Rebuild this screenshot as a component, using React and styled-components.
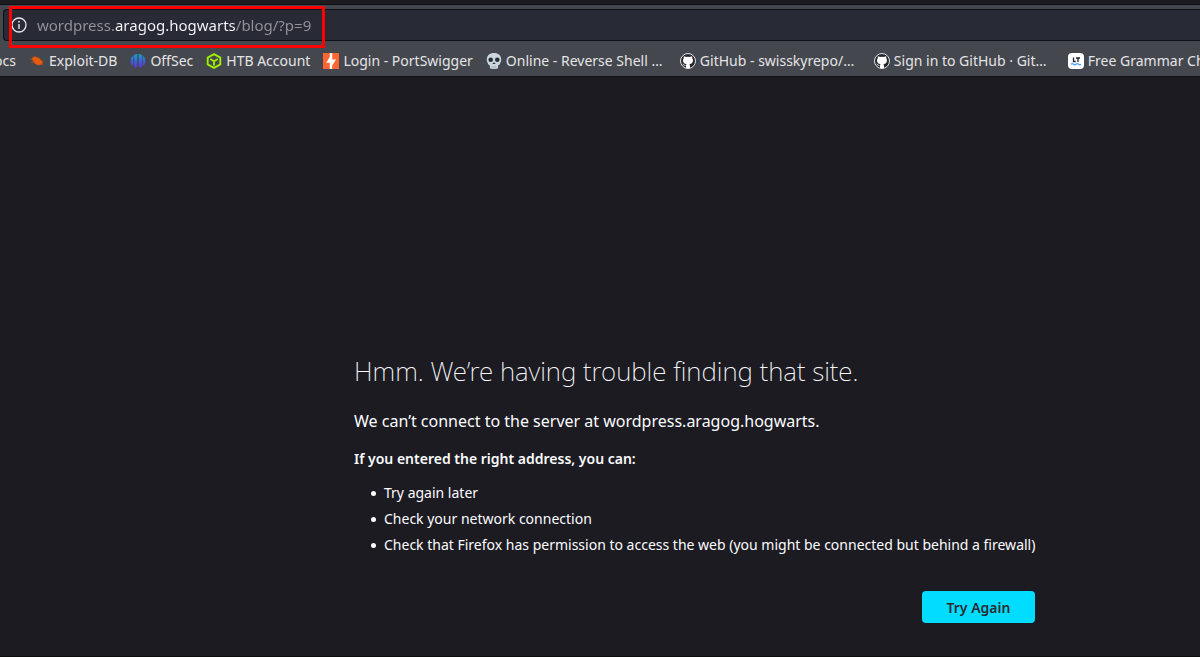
import React from "react";
import styled, { createGlobalStyle } from "styled-components";

const GlobalStyle = createGlobalStyle`
  * { box-sizing: border-box; }
  body {
    margin: 0;
    background: #1c1b22;
    color: #fbfbfe;
    font-family: "Noto Sans", "Open Sans", sans-serif;
    font-size: 14px;
    overflow-x: hidden;
  }
`;

const Window = styled.div`
  display: flex;
  flex-direction: column;
  min-height: 100vh;
  overflow: hidden;
  border-bottom: 1px solid #0c0c0d;
`;

const TabStrip = styled.div`
  height: 5px;
  background: #1c1b1f;
  border-bottom: 1px solid #0f1012;
`;

const Chrome = styled.header`
  background: #44474e;
  border-bottom: 1px solid #0f1014;
`;

const AddressBar = styled.form`
  display: flex;
  align-items: center;
  height: 32px;
  margin: 4px 0 0 3px;
  padding-left: 7px;
  gap: 10px;
  background: #282a36;
  border: 1px solid #0f1014;
  border-right: 0;
  border-radius: 4px 0 0 4px;
  position: relative;
`;

const InfoButton = styled.button`
  display: flex;
  padding: 0;
  border: 0;
  background: none;
  color: #e6e6ea;
`;

const AddressInput = styled.input`
  flex: 1;
  min-width: 0;
  height: 28px;
  padding: 0;
  border: 0;
  outline: 0;
  font: inherit;
  font-size: 15px;
  color: transparent;
  caret-color: #fbfbfe;
  background: linear-gradient(90deg, #93949b 78px, #fbfbfe 78px 199px, #93949b 199px);
  -webkit-background-clip: text;
  background-clip: text;
`;

const Highlight = styled.div`
  position: absolute;
  left: 5px;
  top: -4px;
  width: 316px;
  height: 42px;
  border: 3px solid #fe0000;
  pointer-events: none;
`;

const Bookmarks = styled.nav`
  display: flex;
  align-items: center;
  height: 35px;
  padding-top: 4px;
  gap: 13px;
  overflow: hidden;
`;

const Bookmark = styled.a`
  display: flex;
  align-items: center;
  flex: none;
  gap: 4px;
  width: ${({ $long }) => ($long ? "181px" : "auto")};
  color: #e4e4e6;
  line-height: 20px;
  text-decoration: none;
  white-space: nowrap;
  svg { flex: none; }
`;

const ScrolledBookmark = styled(Bookmark)`
  justify-content: flex-end;
  width: 16px;
`;

const Page = styled.main`
  width: 681px;
  max-width: 70%;
  margin-left: 29.5%;
  padding: 270px 0 33px;
`;

const Title = styled.h1`
  margin: 0 0 14px;
  font-size: 26px;
  font-weight: 200;
  line-height: 48px;
  white-space: nowrap;
`;

const Lead = styled.p`
  margin: 0 0 14px;
  font-size: 16px;
  line-height: 24px;
  white-space: nowrap;
`;

const Hint = styled.p`
  margin: 0 0 9px;
  font-weight: 600;
  line-height: 24px;
`;

const Tips = styled.ul`
  margin: 0 0 33px;
  padding-left: 17px;
  list-style: none;
`;

const Tip = styled.li`
  display: flex;
  align-items: center;
  gap: 8px;
  line-height: 26px;
  white-space: nowrap;

  &::before {
    content: "";
    flex: none;
    width: 5px;
    height: 5px;
    border-radius: 50%;
    background: currentColor;
  }
`;

const Actions = styled.div`
  display: flex;
  justify-content: flex-end;
`;

const PrimaryButton = styled.button`
  min-width: 113px;
  height: 32px;
  padding: 0 24px;
  border: 0;
  border-radius: 4px;
  background: #00ddff;
  color: #2b2a33;
  font: inherit;
  font-weight: 600;
`;

const Icon = ({ size = 16, children }) => (
  <svg width={size} height={size} viewBox="0 0 16 16" aria-hidden="true">
    {children}
  </svg>
);

const InfoIcon = () => (
  <Icon>
    <circle cx="8" cy="8" r="7" fill="none" stroke="currentColor" strokeWidth="1.3" />
    <path d="M8 7v5" stroke="currentColor" strokeWidth="1.4" />
    <circle cx="8" cy="4.7" r=".9" fill="currentColor" />
  </Icon>
);

const BugIcon = () => (
  <Icon>
    <path d="M3 5 5.500 3.500 9 4.500l3 2.500 1.800 2.200-1 2.300-3.300.7-3.200-1.200L4 8.500Z" fill="#e8590c" />
    <path d="M1 6l4 1M2 9.500l4-1M7 5 6 3M10 6l1-1.500M12 8l2.500.2M12.500 10.500l1.500 1.500M10 11v2" stroke="#c4541a" strokeWidth=".6" fill="none" />
  </Icon>
);

const OffSecIcon = () => (
  <Icon>
    <defs>
      <linearGradient id="offsec" x1="0" y1="0" x2="0" y2="1">
        <stop offset="0" stopColor="#14a8cc" />
        <stop offset=".5" stopColor="#3a63d8" />
        <stop offset="1" stopColor="#6334cf" />
      </linearGradient>
    </defs>
    <path d="M3.300 2.500v10.500Q.5 11.500.5 8T3.300 2.500ZM4.100 2 7.300.8v12.700L5.500 15 4.100 13.500ZM8.700.8l3.200 1.200v11.500L10.500 15 8.700 13.500ZM12.700 2.500q2.800 2 2.800 5.500t-2.800 5Z" fill="url(#offsec)" />
  </Icon>
);

const CubeIcon = () => (
  <Icon>
    <path d="m8 1.200 6.300 3.400v6.800L8 14.800l-6.300-3.400V4.600ZM4.200 6 8 8.200 11.800 6M8 8.200v4.300" fill="none" stroke="#9fef00" strokeWidth="1.900" strokeLinejoin="round" />
  </Icon>
);

const BoltIcon = () => (
  <Icon>
    <path d="M0 0h16v16H0Z" fill="#ff6633" />
    <path d="M6.800 0h2.400v6.400h3.800L9.200 12.500V16H6.800V9.800H3.200L6.800 4Z" fill="#fff" />
  </Icon>
);

const SkullIcon = () => (
  <Icon>
    <path d="M8 0C3.500 0 .8 2.700.8 6.600c0 1.700.3 2.600 1 3.500.2 1.500.8 2 2 2.200L4 15q.4.800 1.200.6.500.6 1.400.2.600.4 1.400 0 .8.400 1.400 0 .9.400 1.400-.2.800.2 1.200-.6l.2-2.700c1.200-.2 1.800-.7 2-2.200.7-.9 1-1.800 1-3.500C15.200 2.700 12.500 0 8 0Z" fill="#ccd6dd" />
    <circle cx="4.700" cy="6.800" r="2.300" fill="#292f33" />
    <circle cx="11.300" cy="6.800" r="2.300" fill="#292f33" />
    <path d="M6.600 10.700q.2-1 .9-1.200l.5.400.5-.4q.7.200.9 1.200-.8.600-1.400 0-.6.600-1.400 0Z" fill="#292f33" />
    <path d="M6.400 13v2M8 13v2M9.600 13v2" stroke="#8fa0ab" strokeWidth=".6" />
  </Icon>
);

const GitHubIcon = () => (
  <Icon>
    <circle cx="8" cy="8" r="7.500" fill="#24292e" stroke="#e3e3e3" strokeWidth="1" />
    <path d="M6 15v-2.200c-2 .4-2.500-.8-3-1.500l-.7-.4c.9-.4 1.500.2 2 .9.500.7 1 .7 1.800.4.100-.5.300-.8.500-1C4.600 11 3 10.200 3 7.300c0-.8.300-1.500.8-2.100-.1-.6-.1-1.400.1-2 .7 0 1.500.4 2.100.8q2-.5 4 0c.6-.4 1.400-.8 2.100-.8.200.6.200 1.400.1 2 .5.600.8 1.300.8 2.100 0 2.900-1.600 3.700-3.600 3.900.4.400.6.900.6 1.700V15q-2 .7-4 0Z" fill="#fff" />
  </Icon>
);

const LanguageToolIcon = () => (
  <Icon>
    <rect width="16" height="16" rx="4" fill="#fff" />
    <path d="M5.500 4.500v4h2.300M8 5h4M10 5v4" fill="none" stroke="#1f2430" strokeWidth="1.300" />
    <path d="M3 11.300q1.250-1.200 2.500 0t2.500 0 2.500 0 2.500 0" fill="none" stroke="#45a1fc" strokeWidth="1.200" />
  </Icon>
);

const bookmarks = [
  { label: "Exploit-DB", icon: BugIcon },
  { label: "OffSec", icon: OffSecIcon },
  { label: "HTB Account", icon: CubeIcon },
  { label: "Login - PortSwigger", icon: BoltIcon },
  { label: "Online - Reverse Shell …", icon: SkullIcon, long: true },
  { label: "GitHub - swisskyrepo/…", icon: GitHubIcon, long: true },
  { label: "Sign in to GitHub · Git…", icon: GitHubIcon, long: true },
  { label: "Free Grammar Ch", icon: LanguageToolIcon },
];

const tips = [
  "Try again later",
  "Check your network connection",
  "Check that Firefox has permission to access the web (you might be connected but behind a firewall)",
];

export default function App() {
  return (
    <Window>
      <GlobalStyle />
      <TabStrip />
      <Chrome>
        <AddressBar onSubmit={(e) => e.preventDefault()}>
          <InfoButton type="button" aria-label="Site information">
            <InfoIcon />
          </InfoButton>
          <AddressInput aria-label="Address" spellCheck={false} defaultValue="wordpress.aragog.hogwarts/blog/?p=9" />
          <Highlight />
        </AddressBar>
        <Bookmarks aria-label="Bookmarks">
          <ScrolledBookmark href="#">ocs</ScrolledBookmark>
          {bookmarks.map(({ label, icon: Glyph, long }) => (
            <Bookmark href="#" key={label} $long={long}>
              <Glyph />
              {label}
            </Bookmark>
          ))}
        </Bookmarks>
      </Chrome>
      <Page>
        <Title>Hmm. We’re having trouble finding that site.</Title>
        <Lead>We can’t connect to the server at wordpress.aragog.hogwarts.</Lead>
        <Hint>If you entered the right address, you can:</Hint>
        <Tips>
          {tips.map((tip) => (
            <Tip key={tip}>{tip}</Tip>
          ))}
        </Tips>
        <Actions>
          <PrimaryButton type="button">Try Again</PrimaryButton>
        </Actions>
      </Page>
    </Window>
  );
}
